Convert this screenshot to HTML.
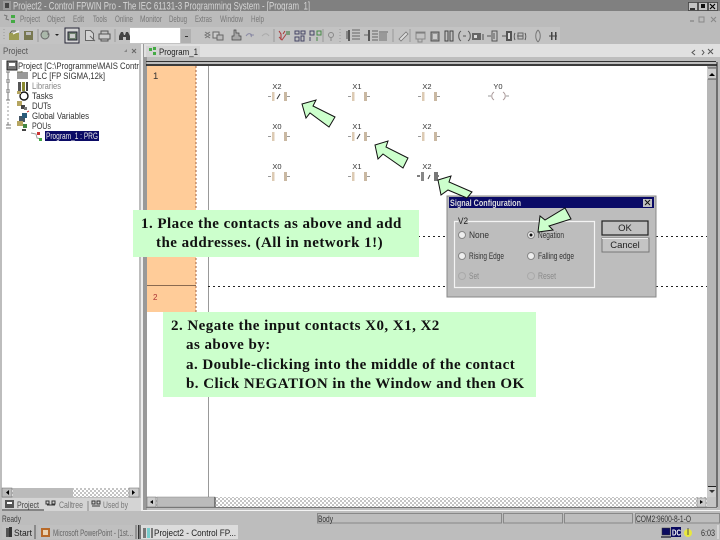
<!DOCTYPE html>
<html><head><meta charset="utf-8"><style>
html,body{margin:0;padding:0;background:#bdbdbd;overflow:hidden}
body{width:720px;height:540px;position:relative}
svg{position:absolute;left:0;top:0;filter:blur(.35px)}
text{font-family:"Liberation Sans",sans-serif;font-size:9.5px}
.c{position:absolute;background:#ccffcc;font:bold 15px/19.4px "Liberation Serif",serif;letter-spacing:.46px;color:#111;white-space:pre;box-sizing:border-box;filter:blur(.2px)}
.c div{height:19.4px}
</style></head><body>
<svg width="720" height="540" viewBox="0 0 720 540">
<defs>
<pattern id="ck" width="4" height="4" patternUnits="userSpaceOnUse"><rect width="4" height="4" fill="#fff"/><rect width="2" height="2" fill="#c4c4c4"/><rect x="2" y="2" width="2" height="2" fill="#c4c4c4"/></pattern>
<g id="ct"><path d="M-10 .5h3M9 .5h3" stroke="#999" fill="none"/><rect x="-6" y="-4" width="2.500" height="9" fill="#ddcbb4"/><rect x="6" y="-4" width="3" height="9" fill="#c9b8a2"/></g>
<g id="neg"><path d="M-1 3L2 -2" stroke="#333" fill="none"/></g>
</defs>

<!-- title bar -->
<rect width="720" height="11" fill="#808080"/>
<rect x="3" y="1" width="8" height="9" fill="#9a9a9a"/><path d="M5 3h4v5H5z" fill="#444"/>
<text x="13" y="9.500" fill="#d6d6d6" textLength="297" lengthAdjust="spacingAndGlyphs" style="font-size:11px">Project2 - Control FPWIN Pro - The IEC 61131-3 Programming System - [Program_1]</text>
<g fill="#c4c4c4" stroke="#222" stroke-width=".6"><rect x="688.5" y="2.5" width="9" height="8"/><rect x="698.5" y="2.5" width="9" height="8"/><rect x="708.5" y="2.5" width="9" height="8"/></g>
<path d="M690 9h5" stroke="#000" stroke-width="1.5"/><path d="M701 4h4v4h-4z" fill="#111"/><path d="M710 4l5 5M715 4l-5 5" stroke="#000" stroke-width="1.2"/>

<!-- menu -->
<rect y="11" width="720" height="33" fill="#bbb"/>
<path d="M4 15l3 1-1 3 3 1" stroke="#777" fill="none"/><rect x="11" y="15" width="4" height="3" fill="#4a4"/><rect x="11" y="20" width="4" height="3" fill="#4a4"/>
<g fill="#777"><text x="20" y="22" textLength="20" lengthAdjust="spacingAndGlyphs">Project</text><text x="47" y="22" textLength="18" lengthAdjust="spacingAndGlyphs">Object</text><text x="73" y="22" textLength="11" lengthAdjust="spacingAndGlyphs">Edit</text><text x="93" y="22" textLength="14" lengthAdjust="spacingAndGlyphs">Tools</text><text x="115" y="22" textLength="18" lengthAdjust="spacingAndGlyphs">Online</text><text x="140" y="22" textLength="22" lengthAdjust="spacingAndGlyphs">Monitor</text><text x="169" y="22" textLength="18" lengthAdjust="spacingAndGlyphs">Debug</text><text x="195" y="22" textLength="17" lengthAdjust="spacingAndGlyphs">Extras</text><text x="220" y="22" textLength="23" lengthAdjust="spacingAndGlyphs">Window</text><text x="251" y="22" textLength="13" lengthAdjust="spacingAndGlyphs">Help</text></g>
<path d="M690 21h4" stroke="#777"/><rect x="699" y="17" width="5" height="5" fill="none" stroke="#888"/><path d="M711 17l5 5M716 17l-5 5" stroke="#888"/>

<!-- toolbar -->
<rect y="27" width="560" height="17" fill="#c3c3c3"/>
<path d="M4 29v12" stroke="#999" stroke-dasharray="1 2"/>
<rect x="9" y="33" width="10" height="7" fill="#9c9c52"/><path d="M10 33l2-2h4" stroke="#665" fill="none"/><path d="M13 34l6-3" stroke="#fff"/>
<rect x="24" y="31" width="9" height="9" fill="#787850"/><rect x="26" y="32" width="5" height="3" fill="#bbb"/>
<path d="M38 29v13" stroke="#999"/>
<circle cx="45" cy="35" r="4" fill="#aab8aa" stroke="#666"/><path d="M42 31h6v4" stroke="#777" fill="none"/>
<path d="M55 34l2 2 2-2z" fill="#222"/>
<rect x="65" y="28" width="14" height="15" fill="#d5d5d5" stroke="#223" stroke-width="1"/><rect x="68" y="32" width="9" height="8" fill="#6e806e" stroke="#223"/><rect x="70" y="34" width="5" height="4" fill="#ccc"/>
<path d="M85.500 30.500h5l3 3v7h-8z" fill="#d4d4d4" stroke="#666"/><path d="M90 36l5 5" stroke="#666"/>
<rect x="99" y="34" width="11" height="5" fill="#ccc" stroke="#555"/><path d="M101 34v-3h7v3M101 39v2h7v-2" fill="none" stroke="#555"/>
<path d="M115 29v13" stroke="#999"/>
<path d="M119 40v-4l2-4h2l1 3h1l1-3h2l2 4v4h-4v-3h-3v3z" fill="#444"/>
<rect x="130" y="28" width="50" height="15" fill="#fff"/>
<rect x="181" y="29" width="10" height="14" fill="#b0b0b0"/><path d="M185 36h3v1h-3z" fill="#333"/>
<path d="M199 31l5 3-5 3M204 31l-5 3 5 3" stroke="#777" fill="none" transform="translate(6 1)"/>
<rect x="213" y="32" width="6" height="6" fill="#ccc" stroke="#666"/><rect x="217" y="35" width="6" height="5" fill="#bbb" stroke="#666"/>
<path d="M234 30h2v3h3v3h2v4h-9v-4h2z" fill="#a8a8a8" stroke="#444" stroke-width=".7"/>
<path d="M246 36c2-3 4-3 6-1l-1 2M250 35h4" stroke="#8b8ba5" fill="none"/>
<path d="M262 36c3-3 5-3 7 0" stroke="#aaa" fill="none"/>
<path d="M274 29v13" stroke="#999"/>
<path d="M279 31l2 3v6M285 31l-2 3" stroke="#a33" fill="none"/><path d="M279 37l3 3 5-7" stroke="#a44" fill="none"/><rect x="286" y="31" width="4" height="4" fill="#7a9a7a"/>
<path d="M295 31h4v3h-4zM301 31h4v3h-4zM295 37h4v4h-4zM301 36h3v5h-3z" fill="none" stroke="#446"/>
<path d="M310 31h4v4h-4zM310 37v4" fill="none" stroke="#446"/><path d="M317 31h4v4h-4zM317 37v4" fill="none" stroke="#484"/>
<path d="M323 29v13" stroke="#999"/>
<circle cx="331" cy="35" r="2.500" fill="none" stroke="#888"/><path d="M331 38v3" stroke="#888"/>
<path d="M340 29v13" stroke="#999" stroke-dasharray="1 2"/>
<path d="M349 30v11" stroke="#333" stroke-width="1.500"/><path d="M352 30h8M352 33h8M352 36h8M352 39h8" stroke="#666"/><rect x="346" y="31" width="2" height="8" fill="#888"/>
<path d="M369 30v11" stroke="#333" stroke-width="1.500"/><path d="M372 31h6M372 34h6M372 37h6M372 40h6M364 35h4" stroke="#666"/>
<rect x="379" y="33" width="8" height="8" fill="#999"/><path d="M379 32h9" stroke="#666"/>
<path d="M393 29v13" stroke="#999"/>
<path d="M399 39l7-7 2 2-7 7z" fill="#ddd" stroke="#777" stroke-width=".8"/>
<path d="M410 29v13" stroke="#999"/>
<rect x="416" y="32" width="9" height="7" fill="none" stroke="#888"/><path d="M418 39v3h4v-3" stroke="#888" fill="none"/><path d="M416 33h9" stroke="#777"/>
<rect x="431" y="32" width="8" height="9" fill="#999" stroke="#555"/><rect x="433" y="34" width="4" height="5" fill="#ccc"/>
<rect x="445" y="31" width="3" height="10" fill="none" stroke="#444"/><rect x="450" y="31" width="3" height="10" fill="none" stroke="#444"/>
<path d="M461 31c-3 2-3 8 0 10M468 31c3 2 3 8 0 10M463 36h3" stroke="#555" fill="none"/>
<rect x="472" y="33" width="9" height="7" fill="#666"/><rect x="474" y="35" width="3" height="3" fill="#ddd"/><rect x="482" y="34" width="2" height="6" fill="#888"/>
<path d="M487 36h4M492 31h5v10h-5zM494 33v6" stroke="#555" fill="none"/>
<path d="M502 36h4" stroke="#555"/><rect x="506" y="31" width="6" height="10" fill="#555"/><rect x="508" y="33" width="2" height="6" fill="#ddd"/>
<path d="M515 33c-1 2-1 5 0 7M525 33c1 2 1 5 0 7M517 36h6" stroke="#555" fill="none"/><rect x="518" y="33" width="5" height="6" fill="none" stroke="#666"/>
<path d="M538 30c-3 3-3 9 0 12M538 30c3 3 3 9 0 12" stroke="#777" fill="none"/>
<path d="M549 36h2M555 36h2" stroke="#444"/><rect x="551" y="32" width="1.500" height="8" fill="#444"/><rect x="555" y="32" width="1.500" height="8" fill="#444"/><path d="M552 36h3" stroke="#444"/>

<!-- left pane header -->
<rect y="44" width="143" height="16" fill="#c0c0c0"/>
<text x="3" y="54" fill="#555" textLength="25" lengthAdjust="spacingAndGlyphs">Project</text>
<path d="M124 52l3-3 0 3z" fill="#888"/><path d="M132 49l4 4M136 49l-4 4" stroke="#666"/>
<!-- tree -->
<rect x="2" y="60" width="137" height="428" fill="#fff"/>
<path d="M8 72v8M6 72h4M6 80h4M8 82v8M6 82h4M6 90h4M8 92v8M6 92h4M6 100h4" stroke="#777" fill="none"/>
<path d="M8 102v20" stroke="#999" stroke-dasharray="2 2"/><path d="M6 125h5M8 122v3M6 128h5" stroke="#777" fill="none"/>
<rect x="7" y="61" width="10" height="9" fill="#777" stroke="#222"/><rect x="9" y="63" width="6" height="3" fill="#fff"/>
<g>
<rect x="17" y="72" width="11" height="7" fill="#9a9a9a"/><path d="M17 72h5v-1" stroke="#776" fill="none"/>
<rect x="18" y="82" width="3" height="9" fill="#555"/><rect x="22" y="82" width="3" height="9" fill="#8a8a30"/><rect x="26" y="82" width="2" height="9" fill="#444"/>
<circle cx="24" cy="96" r="4" fill="#fff" stroke="#111" stroke-width="1.400"/><rect x="17" y="91" width="4" height="3" fill="#b5a560"/>
<rect x="17" y="101" width="5" height="5" fill="#b5a560"/><rect x="21" y="105" width="4" height="4" fill="#444"/><rect x="24" y="107" width="3" height="3" fill="#777"/>
<rect x="19" y="116" width="6" height="6" fill="#445566"/><rect x="22" y="113" width="5" height="5" fill="#2a5a7a"/><path d="M27 112l2-1" stroke="#c33"/>
<rect x="17" y="121" width="6" height="5" fill="#b5a560"/><rect x="23" y="124" width="4" height="4" fill="#484"/><rect x="22" y="129" width="4" height="2" fill="#444"/>
<path d="M31 133l5 1 1 4 4 1" stroke="#999" fill="none"/><rect x="37" y="132" width="3" height="3" fill="#c33"/><rect x="39" y="138" width="3" height="3" fill="#4a4"/>
</g>
<g fill="#333">
<text x="18" y="69" textLength="121" lengthAdjust="spacingAndGlyphs">Project [C:\Programme\MAIS Contr</text>
<text x="32" y="79" textLength="73" lengthAdjust="spacingAndGlyphs">PLC [FP SIGMA,12k]</text>
<text x="32" y="89" fill="#888" textLength="29" lengthAdjust="spacingAndGlyphs">Libraries</text>
<text x="32" y="99" textLength="21" lengthAdjust="spacingAndGlyphs">Tasks</text>
<text x="32" y="109" textLength="19" lengthAdjust="spacingAndGlyphs">DUTs</text>
<text x="32" y="119" textLength="57" lengthAdjust="spacingAndGlyphs">Global Variables</text>
<text x="32" y="129" textLength="19" lengthAdjust="spacingAndGlyphs">POUs</text>
</g>
<rect x="45" y="131" width="54" height="10" fill="#0b0b66"/>
<text x="46" y="139" fill="#e8e8e8" textLength="52" lengthAdjust="spacingAndGlyphs">Program_1 : PRG</text>

<!-- left scroll & tabs -->
<rect x="2" y="488" width="137" height="9" fill="url(#ck)"/>
<rect x="2" y="488" width="10" height="9" fill="#bbb" stroke="#666" stroke-width=".5"/><path d="M9 490v5l-3-2.500z" fill="#000"/>
<rect x="13" y="488" width="60" height="9" fill="#bbb"/>
<rect x="129" y="488" width="10" height="9" fill="#ccc" stroke="#666" stroke-width=".5"/><path d="M132 490v5l3-2.500z" fill="#000"/>
<rect x="2" y="498" width="139" height="13" fill="#d4d4d4"/>
<rect x="5" y="500" width="9" height="8" fill="#555"/><rect x="7" y="502" width="5" height="2" fill="#fff"/>
<path d="M2 510h42" stroke="#333"/>
<text x="17" y="508" fill="#444" textLength="22" lengthAdjust="spacingAndGlyphs">Project</text>
<path d="M46 501h3v3h-3zM52 501h3v3h-3zM47 505h8" stroke="#333" fill="none"/>
<text x="59" y="508" fill="#777" textLength="24" lengthAdjust="spacingAndGlyphs">Calltree</text>
<path d="M88 501v10" stroke="#888"/>
<path d="M92 501h3v3h-3zM97 501h3v3h-3zM92 506h8" stroke="#333" fill="none"/>
<text x="103" y="508" fill="#777" textLength="25" lengthAdjust="spacingAndGlyphs">Used by</text>

<!-- editor frame -->
<rect x="141" y="44" width="2" height="468" fill="#eee"/>
<rect x="143" y="44" width="4" height="468" fill="#999"/>
<rect x="144" y="44" width="576" height="13" fill="#e0e0e0"/>
<rect x="146" y="46" width="54" height="11" fill="#d4d4d4"/>
<rect x="149" y="48" width="3" height="3" fill="#4a4"/><rect x="153" y="47" width="3" height="3" fill="#4a4"/><rect x="153" y="52" width="3" height="3" fill="#4a4"/>
<text x="159" y="55" fill="#222" textLength="39" lengthAdjust="spacingAndGlyphs">Program_1</text>
<path d="M695 50l-3 2.500 3 2.500M702 50l2 2.500-2 2.500M708 49l5 5M713 49l-5 5" stroke="#555" fill="none"/>
<path d="M146 61.500h570" stroke="#333"/>
<path d="M146 65h571" stroke="#111" stroke-width="1.500"/>
<rect x="147" y="66" width="560" height="431" fill="#fff"/>
<rect x="147" y="66" width="49" height="246" fill="#ffcc99"/>
<path d="M196 66v246" stroke="#a06040" stroke-dasharray="2 2"/>
<path d="M208.500 66v431" stroke="#999"/>
<path d="M147 285.500h49" stroke="#8a6a50"/>
<text x="153" y="79" fill="#333">1</text>
<text x="153" y="300" fill="#a33" style="font-size:8px">2</text>
<path d="M208 236.500h240M656 236.500h51M208 286.500h240M656 286.500h51" stroke="#222" stroke-dasharray="2 3"/>

<!-- contacts -->
<g fill="#333" text-anchor="middle" style="font-size:7.500px">
<text x="277" y="89" style="font-size:7.500px">X2</text><text x="357" y="89" style="font-size:7.500px">X1</text><text x="427" y="89" style="font-size:7.500px">X2</text><text x="498" y="89" style="font-size:7.500px">Y0</text>
<text x="277" y="129" style="font-size:7.500px">X0</text><text x="357" y="129" style="font-size:7.500px">X1</text><text x="427" y="129" style="font-size:7.500px">X2</text>
<text x="277" y="169" style="font-size:7.500px">X0</text><text x="357" y="169" style="font-size:7.500px">X1</text><text x="427" y="169" style="font-size:7.500px">X2</text>
</g>
<use href="#ct" x="278" y="96"/><use href="#neg" x="278" y="96"/>
<use href="#ct" x="358" y="96"/><use href="#ct" x="428" y="96"/>
<path d="M488 96h3M506 96h3" stroke="#999"/><path d="M494 92c-3 2-3 6 0 8M503 92c3 2 3 6 0 8" stroke="#a99" fill="none"/>
<use href="#ct" x="278" y="136"/><use href="#ct" x="358" y="136"/><use href="#neg" x="358" y="136"/><use href="#ct" x="428" y="136"/>
<use href="#ct" x="278" y="176"/><use href="#ct" x="358" y="176"/>
<path d="M417 176h3M436 176h3" stroke="#555" stroke-width="1.500"/><rect x="421" y="172" width="3" height="9" fill="#888"/><rect x="434" y="172" width="4" height="9" fill="#777"/><path d="M428 179l2-4" stroke="#444"/>

<!-- right scrollbars -->
<rect x="707" y="66" width="10" height="431" fill="#b6b6b6"/>
<rect x="707" y="68" width="9" height="11" fill="#ccc"/><path d="M708 68h8M708 79h8" stroke="#333" stroke-width=".7"/><path d="M709 76h6l-3-3z" fill="#000"/>
<rect x="707" y="487" width="9" height="10" fill="#ccc"/><path d="M708 486.500h8" stroke="#222"/><path d="M709 490h6l-3 3z" fill="#333"/>
<rect x="147" y="497" width="560" height="10" fill="url(#ck)"/>
<rect x="147" y="497" width="9" height="10" fill="#ccc" stroke="#666" stroke-width=".5"/><path d="M153 500v4l-3-2z" fill="#000"/>
<rect x="157" y="497" width="58" height="10" fill="#bbb" stroke="#888" stroke-width=".5"/><path d="M215 497v10" stroke="#333"/>
<rect x="697" y="498" width="9" height="9" fill="#ccc" stroke="#777" stroke-width=".5"/><path d="M700 500v4l3-2z" fill="#000"/>
<rect x="707" y="497" width="10" height="12" fill="#c4c4c4"/>
<path d="M146 507.500h572" stroke="#777"/><path d="M143 510.500h577" stroke="#f4f4f4"/>
<rect x="717" y="66" width="3" height="444" fill="#bbb"/><path d="M717 62v445" stroke="#222"/>

<!-- status -->
<rect y="511" width="720" height="29" fill="#bdbdbd"/>
<text x="2" y="522" fill="#444" textLength="19" lengthAdjust="spacingAndGlyphs">Ready</text>
<g fill="none" stroke="#888"><rect x="317.500" y="513.500" width="184" height="9.500"/><rect x="503.500" y="513.500" width="59" height="9.500"/><rect x="564.500" y="513.500" width="68" height="9.500"/><rect x="635.500" y="513.500" width="84" height="9.500"/></g>
<text x="318" y="522" fill="#333" textLength="15" lengthAdjust="spacingAndGlyphs">Body</text>
<text x="636" y="522" fill="#333" textLength="55" lengthAdjust="spacingAndGlyphs">COM2:9600-8-1-O</text>

<!-- taskbar -->
<rect x="2" y="525" width="33" height="14" fill="#c0c0c0"/><path d="M35 525v14" stroke="#555"/>
<rect x="6" y="528" width="3" height="9" fill="#555"/><rect x="9" y="527" width="3" height="10" fill="#333"/>
<text x="14" y="536" fill="#222" textLength="18" lengthAdjust="spacingAndGlyphs">Start</text>
<rect x="38" y="525" width="98" height="14" fill="#c0c0c0"/><path d="M136 525v14" stroke="#666"/>
<rect x="41" y="528" width="9" height="9" fill="#b86a28"/><rect x="43" y="530" width="5" height="5" fill="#ead2b0"/>
<text x="53" y="536" fill="#666" textLength="80" lengthAdjust="spacingAndGlyphs">Microsoft PowerPoint - [1st...</text>
<path d="M138.500 525v14M140 525v14" stroke="#333"/>
<rect x="141" y="525" width="97" height="14" fill="#dcdcdc"/>
<rect x="143" y="528" width="3" height="10" fill="#777"/><rect x="147" y="528" width="3" height="10" fill="#7cc"/><rect x="151" y="528" width="2" height="10" fill="#777"/>
<text x="154" y="536" fill="#222" textLength="82" lengthAdjust="spacingAndGlyphs">Project2 - Control FP...</text>
<rect x="662" y="528" width="8" height="7" fill="#0c0c60" stroke="#333" stroke-width=".5"/><path d="M661 537h10" stroke="#334" stroke-width="1.500"/>
<rect x="671" y="527" width="10" height="10" fill="#0a0a60"/><text x="672" y="535.500" fill="#fff" font-weight="bold" textLength="9" lengthAdjust="spacingAndGlyphs" style="font-size:8.500px">DC</text>
<circle cx="688" cy="533" r="4" fill="#e8e840"/><path d="M688 528v7" stroke="#554"/>
<text x="701" y="536" fill="#333" textLength="14" lengthAdjust="spacingAndGlyphs">6:03</text>
<path d="M718 525v14" stroke="#eee"/>

<!-- dialog -->
<rect x="447" y="196" width="209" height="101" fill="#bdbdbd" stroke="#888"/>
<rect x="449" y="197" width="205" height="11" fill="#0a0a66"/>
<text x="450" y="206" fill="#ddd" font-weight="bold" textLength="71" lengthAdjust="spacingAndGlyphs">Signal Configuration</text>
<rect x="643" y="199" width="9" height="8" fill="#c0c0c0"/><path d="M645 200l5 5M650 200l-5 5" stroke="#111"/>
<path d="M468 221.500h126.500v66h-140v-66h4" fill="none" stroke="#f4f4f4" stroke-width="1.200"/>
<text x="458" y="224" fill="#222" textLength="10" lengthAdjust="spacingAndGlyphs">V2</text>
<rect x="602" y="221" width="46" height="14" fill="#c0c0c0" stroke="#222" stroke-width="1.200"/><text x="625" y="231" text-anchor="middle" fill="#222">OK</text>
<rect x="602" y="238" width="47" height="14" fill="#c4c4c4" stroke="#777"/><rect x="602" y="238" width="46" height="1" fill="#eee"/><text x="625" y="248" text-anchor="middle" fill="#222">Cancel</text>
<g fill="#eee" stroke="#888"><circle cx="462" cy="235" r="3.500"/><circle cx="531" cy="235" r="3.500"/><circle cx="462" cy="256" r="3.500"/><circle cx="531" cy="256" r="3.500"/></g>
<g fill="#bdbdbd" stroke="#aaa"><circle cx="462" cy="276" r="3.500"/><circle cx="531" cy="276" r="3.500"/></g>
<circle cx="531" cy="235" r="1.500" fill="#111"/>
<g fill="#333"><text x="469" y="238" textLength="20" lengthAdjust="spacingAndGlyphs">None</text><text x="538" y="238" textLength="26" lengthAdjust="spacingAndGlyphs">Negation</text><text x="469" y="259" textLength="35" lengthAdjust="spacingAndGlyphs">Rising Edge</text><text x="538" y="259" textLength="36" lengthAdjust="spacingAndGlyphs">Falling edge</text></g>
<g fill="#8a8a8a"><text x="469" y="279" textLength="10" lengthAdjust="spacingAndGlyphs">Set</text><text x="538" y="279" textLength="18" lengthAdjust="spacingAndGlyphs">Reset</text></g>

<!-- arrows -->
<g fill="#ccffcc" stroke="#111" stroke-width="1" stroke-linejoin="miter">
<polygon points="302,104 316,100 313,106 335,117 329,127 310,113 306,118"/>
<polygon points="375,145 388,141 386,147 408,158 403,168 383,154 378,159"/>
<polygon points="438,180 451,176 449,182 472,192 467,198 448,190 441,195"/>
<polygon points="538,232 540,216 545,220 565,208 571,219 549,226 553,230"/>
</g>
</svg>
<div class="c" style="left:133px;top:210px;width:286px;height:47px;padding:5px 0 0 8px"><div>1. Place the contacts as above and add</div><div style="padding-left:15px">the addresses. (All in network 1!)</div></div>
<div class="c" style="left:163px;top:312px;width:373px;height:85px;padding:5px 0 0 8px"><div>2. Negate the input contacts X0, X1, X2</div><div style="padding-left:15px">as above by:</div><div style="padding-left:15px">a. Double-clicking into the middle of the contact</div><div style="padding-left:15px">b. Click NEGATION in the Window and then OK</div></div>
</body></html>
